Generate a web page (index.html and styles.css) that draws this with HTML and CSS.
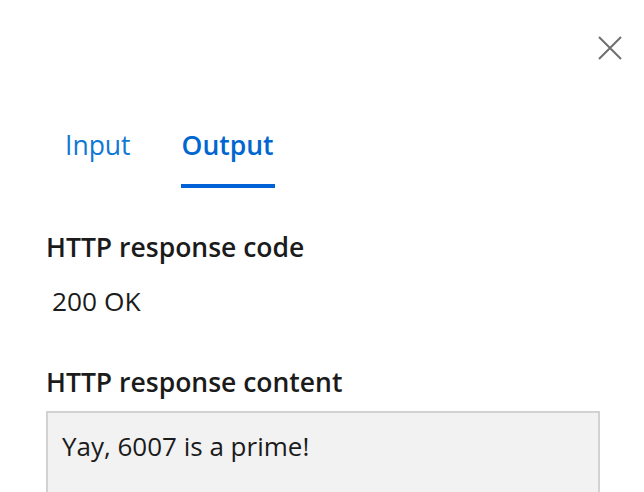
FILE: index.html
```html
<!DOCTYPE html>
<html>
<head>
<meta charset="utf-8">
<link rel="stylesheet" href="styles.css">
</head>
<body>
<div class="panel">
  <div class="topbar">
    <button class="close" aria-label="Close">
      <svg width="24" height="24" viewBox="0 0 24 24"><path d="M1 1 L23 23 M23 1 L1 23" stroke="#6e6e6e" stroke-width="2" fill="none"/></svg>
    </button>
  </div>
  <div class="tabs">
    <div class="tab">Input</div>
    <div class="tab active">Output</div>
  </div>
  <div class="section">
    <div class="label">HTTP response code</div>
    <div class="value">200 OK</div>
  </div>
  <div class="section second">
    <div class="label">HTTP response content</div>
    <div class="content-box">Yay, 6007 is a prime!</div>
  </div>
</div>
</body>
</html>
```
FILE: styles.css
```css
html, body {
  margin: 0;
  padding: 0;
  background: #ffffff;
  overflow: hidden;
}
body {
  font-family: "Open Sans", "Noto Sans", sans-serif;
  color: #1b1b1b;
  width: 644px;
  height: 492px;
}
.panel {
  padding: 0 0 0 46px;
}
.topbar {
  display: flex;
  justify-content: flex-end;
  padding: 36px 22px 0 0;
}
.close {
  border: 0;
  background: none;
  padding: 0;
  width: 24px;
  height: 24px;
  display: block;
}
.close svg { display: block; }
.tabs {
  display: flex;
  gap: 49px;
  margin-top: 67px;
  padding-left: 18px;
}
.tab {
  font-size: 26.5px;
  line-height: 36px;
  color: #0f78d4;
  padding: 0 1px 21px;
  border-bottom: 4px solid transparent;
}
.tab.active {
  color: #0066d0;
  font-weight: 600;
  border-bottom-color: #0062d6;
}
.section {
  margin-top: 41px;
}
.section.second {
  margin-top: 45px;
}
.label {
  font-size: 26.5px;
  font-weight: 600;
  line-height: 36px;
  color: #1b1b1b;
}
.value {
  font-size: 26.3px;
  line-height: 36px;
  margin-top: 18px;
  padding-left: 6px;
  color: #1b1b1b;
}
.content-box {
  margin-top: 11px;
  width: 554px;
  height: 81px;
  box-sizing: border-box;
  background: #f2f2f2;
  border: 2px solid #d2d2d2;
  border-bottom-width: 0;
  padding: 15px 14px 0;
  font-size: 26px;
  line-height: 36px;
  color: #1b1b1b;
}
```
